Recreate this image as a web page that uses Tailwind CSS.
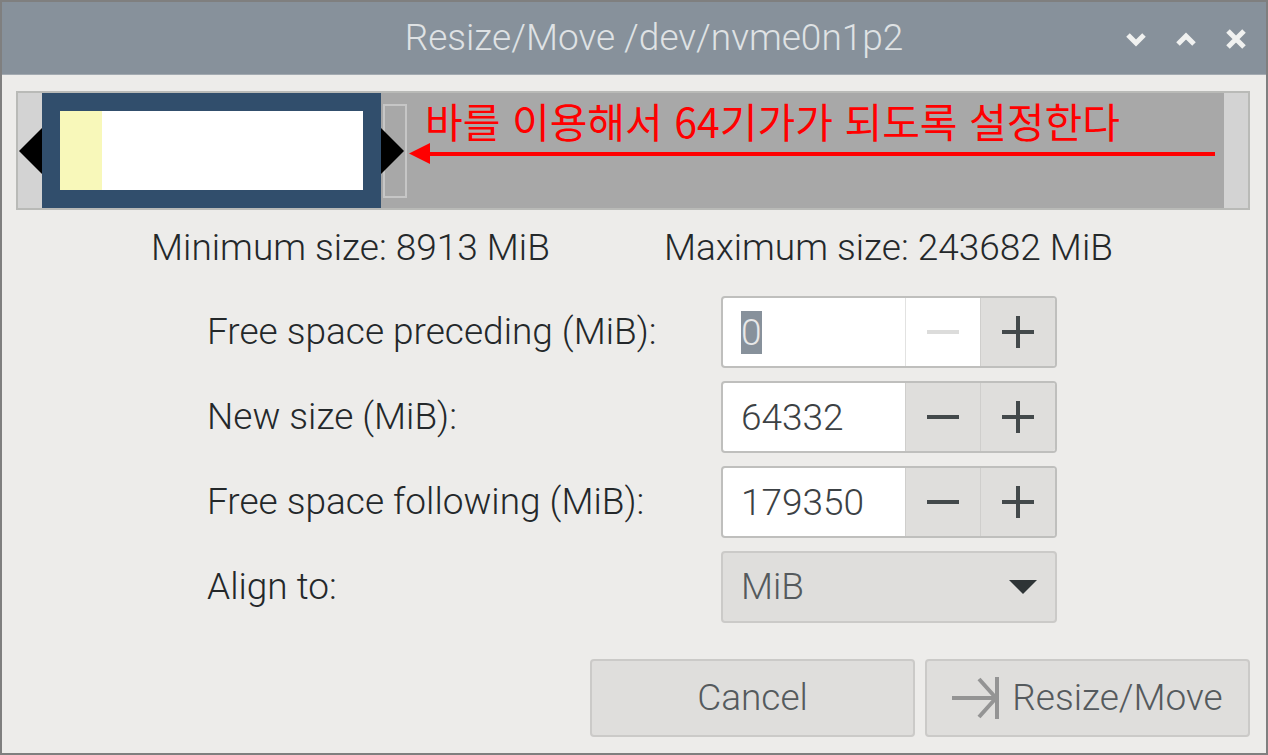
<!DOCTYPE html>
<html lang="ko">

<head>
    <meta charset="UTF-8">
    <meta name="viewport" content="width=device-width, initial-scale=1.0">
    <title>Resize/Move /dev/nvme0n1p2</title>
    <script src="https://cdn.jsdelivr.net/npm/@tailwindcss/browser@4"></script>
</head>

<body class="font-['Roboto','Noto_Sans_CJK_KR',sans-serif] font-light text-[37px] leading-[50px] text-[#24282a]">

<div class="min-h-screen flex flex-col bg-[#edecea] border-2 border-[#7f7f7f]">

    <!-- Title bar -->
    <header class="relative flex items-center justify-center h-[73px] pl-10 bg-[#87919b] border-b border-[#a3aab1]">
        <h1 class="text-[#dfe2e4]">Resize/Move /dev/nvme0n1p2</h1>
        <div class="absolute right-[18px] flex gap-[26px]">
            <button type="button" aria-label="Minimize" class="size-6">
                <svg viewBox="0 0 24 24" fill="none" stroke="#f0f1f0" stroke-width="5"><path d="M4 9l8 8 8-8"/></svg>
            </button>
            <button type="button" aria-label="Maximize" class="size-6">
                <svg viewBox="0 0 24 24" fill="none" stroke="#f0f1f0" stroke-width="5"><path d="M4 18l8-8 8 8"/></svg>
            </button>
            <button type="button" aria-label="Close" class="size-6">
                <svg viewBox="0 0 24 24" fill="none" stroke="#f0f1f0" stroke-width="5"><path d="M4 5l16 16M20 5L4 21"/></svg>
            </button>
        </div>
    </header>

    <main class="flex-1 flex flex-col pl-[14px] pr-4 pt-4 pb-4">

        <!-- Partition bar -->
        <div class="relative flex h-[119px] border-2 border-[#b9bab7] bg-[#a8a8a8]">
            <div class="w-6 flex items-center justify-end bg-[#d3d3d3]">
                <svg class="w-[23px] h-[46px]" viewBox="0 0 23 46"><path d="M23 0v46L0 23z"/></svg>
            </div>
            <div class="w-[339px] p-[18px] bg-[#314e6c]">
                <div class="h-full bg-white">
                    <div class="h-full w-[42px] bg-[#f8f8ba]"></div>
                </div>
            </div>
            <div class="flex-1 flex items-center pl-[2px]">
                <div class="relative w-6 h-[94px] border-2 border-[#c6c6c6]">
                    <svg class="absolute -left-1 top-[22px] w-[23px] h-[46px]" viewBox="0 0 23 46"><path d="M0 0v46l23-23z"/></svg>
                </div>
            </div>
            <div class="w-6 bg-[#d3d3d3]"></div>

            <!-- Note over the free space -->
            <div class="absolute left-[391px] right-[33px] top-1 text-[#ff0000]">
                <p class="pl-4 font-['Noto_Sans_CJK_KR',sans-serif] font-normal text-[41px] leading-[46px] whitespace-nowrap">바를 이용해서 64기가가 되도록 설정한다</p>
                <div class="flex items-center">
                    <svg class="w-[21px] h-[21px]" viewBox="0 0 21 21" fill="#ff0000"><path d="M21 0v21L0 10.500z"/></svg>
                    <div class="flex-1 h-1 bg-[#ff0000]"></div>
                </div>
            </div>
        </div>

        <div class="flex justify-center gap-[114px] pt-[13px] pr-[2px]">
            <p>Minimum size: 8913 MiB</p>
            <p>Maximum size: 243682 MiB</p>
        </div>

        <!-- Size fields -->
        <form class="w-[852px] mx-auto mt-[23px] pr-[2px] grid grid-cols-[1fr_336px] items-center gap-y-[13px]">
            <label for="preceding">Free space preceding (MiB):</label>
            <div class="flex h-[72px] border-2 border-[#bfbfbd] rounded-[4px] bg-white overflow-hidden">
                <input id="preceding" type="text" value="0" class="flex-1 min-w-0 h-full pl-[18px] text-[#3c4144] outline-none selection:bg-[#87919b] selection:text-[#e8e8e8]">
                <button type="button" disabled aria-label="Decrease" class="w-[75px] flex items-center justify-center border-l border-[#e2e2e1]">
                    <svg class="size-8" viewBox="0 0 32 32" stroke="#dcdcdb" stroke-width="4"><path d="M0 16h32"/></svg>
                </button>
                <button type="button" aria-label="Increase" class="w-[75px] flex items-center justify-center border-l border-[#cfcecc] bg-[#dfdedc]">
                    <svg class="size-8" viewBox="0 0 32 32" stroke="#43494b" stroke-width="4"><path d="M0 16h32M16 0v32"/></svg>
                </button>
            </div>

            <label for="newsize">New size (MiB):</label>
            <div class="flex h-[72px] border-2 border-[#bfbfbd] rounded-[4px] bg-white overflow-hidden">
                <input id="newsize" type="text" value="64332" class="flex-1 min-w-0 h-full pl-[18px] text-[#3c4144] outline-none">
                <button type="button" aria-label="Decrease" class="w-[75px] flex items-center justify-center border-l border-[#cfcecc] bg-[#dfdedc]">
                    <svg class="size-8" viewBox="0 0 32 32" stroke="#43494b" stroke-width="4"><path d="M0 16h32"/></svg>
                </button>
                <button type="button" aria-label="Increase" class="w-[75px] flex items-center justify-center border-l border-[#cfcecc] bg-[#dfdedc]">
                    <svg class="size-8" viewBox="0 0 32 32" stroke="#43494b" stroke-width="4"><path d="M0 16h32M16 0v32"/></svg>
                </button>
            </div>

            <label for="following">Free space following (MiB):</label>
            <div class="flex h-[72px] border-2 border-[#bfbfbd] rounded-[4px] bg-white overflow-hidden">
                <input id="following" type="text" value="179350" class="flex-1 min-w-0 h-full pl-[18px] text-[#3c4144] outline-none">
                <button type="button" aria-label="Decrease" class="w-[75px] flex items-center justify-center border-l border-[#cfcecc] bg-[#dfdedc]">
                    <svg class="size-8" viewBox="0 0 32 32" stroke="#43494b" stroke-width="4"><path d="M0 16h32"/></svg>
                </button>
                <button type="button" aria-label="Increase" class="w-[75px] flex items-center justify-center border-l border-[#cfcecc] bg-[#dfdedc]">
                    <svg class="size-8" viewBox="0 0 32 32" stroke="#43494b" stroke-width="4"><path d="M0 16h32M16 0v32"/></svg>
                </button>
            </div>

            <label for="align">Align to:</label>
            <div class="relative h-[72px]">
                <select id="align" class="appearance-none w-full h-full pl-[18px] border-2 border-[#cbcac8] rounded-[4px] bg-[#dfdedc] text-[#555a5d] outline-none">
                    <option>MiB</option>
                    <option>Cylinder</option>
                    <option>None</option>
                </select>
                <svg class="absolute right-5 top-[29px] w-7 h-[14px] pointer-events-none" viewBox="0 0 28 14" fill="#2e3436"><path d="M0 0h28L14 14z"/></svg>
            </div>
        </form>

        <!-- Actions -->
        <div class="mt-auto flex justify-end gap-[10px]">
            <button type="button" class="w-[325px] h-[78px] border-2 border-[#cbcac8] rounded-[4px] bg-[#dfdedc] text-[#555a5d]">Cancel</button>
            <button type="button" class="w-[325px] h-[78px] flex items-center justify-center gap-3 border-2 border-[#cbcac8] rounded-[4px] bg-[#dfdedc] text-[#555a5d]">
                <svg class="w-[48px] h-[42px]" viewBox="0 0 48 42" fill="none" stroke="#949494" stroke-width="4"><path d="M0 21h44M27 2l17 19-17 19M45 0v42"/></svg>
                Resize/Move
            </button>
        </div>
    </main>
</div>

<script>
    // select the first value when the dialog opens
    const preceding = document.getElementById('preceding');
    preceding.focus();
    preceding.select();
</script>
</body>

</html>
